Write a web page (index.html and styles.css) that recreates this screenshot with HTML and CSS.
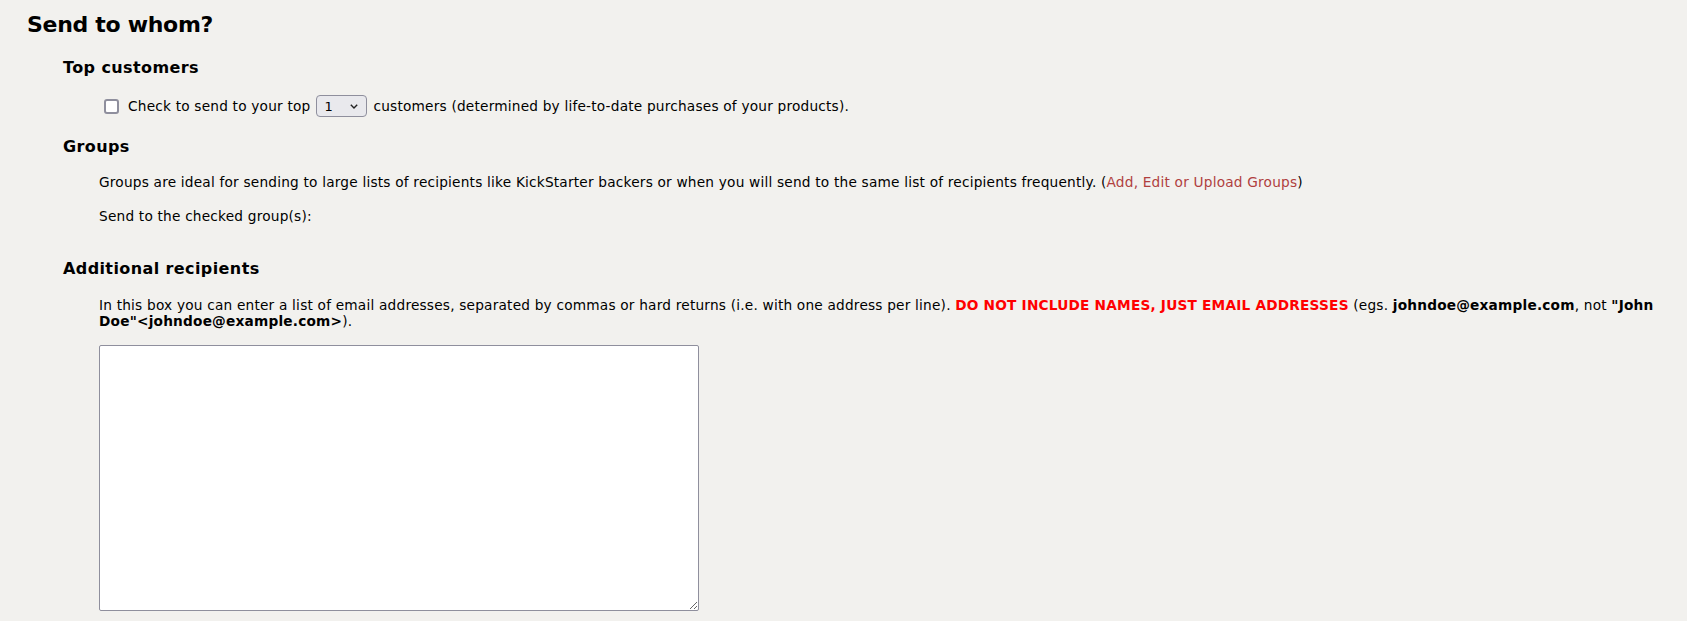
FILE: index.html
```html
<!DOCTYPE html>
<html lang="en">
<head>
    <meta charset="UTF-8">
    <meta name="viewport" content="width=device-width, initial-scale=1.0">
    <title>Send to whom?</title>
    <link rel="stylesheet" href="styles.css">
</head>
<body>
    <div class="panel">
        <h2>Send to whom?</h2>

        <!-- Top customers -->
        <h3>Top customers</h3>
        <div class="topRow">
            <input type="checkbox" id="sendTop">
            <label for="sendTop">Check to send to your top</label>
            <span class="selectWrap">
                <select id="topCount" class="topCount">
                    <option>1</option>
                    <option>5</option>
                    <option>10</option>
                    <option>25</option>
                    <option>50</option>
                    <option>100</option>
                </select>
                <svg class="chevron" width="8" height="5" viewBox="0 0 8 5"><path d="M0.8 0.8 L4 4 L7.2 0.8" fill="none" stroke="#222" stroke-width="1.4"/></svg>
            </span>
            <span>customers (determined by life-to-date purchases of your products).</span>
        </div>

        <!-- Groups -->
        <h3>Groups</h3>
        <p class="note">Groups are ideal for sending to large lists of recipients like KickStarter backers or when you will send to the same list of recipients frequently. (<a href="#">Add, Edit or Upload Groups</a>)</p>
        <p class="note">Send to the checked group(s):</p>

        <!-- Additional recipients -->
        <h3 class="extraHead">Additional recipients</h3>
        <p class="note boxNote">In this box you can enter a list of email addresses, separated by commas or hard returns (i.e. with one address per line). <b class="warn">DO NOT INCLUDE NAMES, JUST EMAIL ADDRESSES</b> (egs. <b>johndoe@example.com</b>, not <b>"John</b> <b>Doe"&lt;johndoe@example.com&gt;</b>).</p>
        <textarea id="recipients" class="recipients"></textarea>
    </div>
</body>
</html>
```

FILE: styles.css
```css
body {
    font-family: "DejaVu Sans", Verdana, sans-serif;
    font-size: 13.7px;
    letter-spacing: 0.2px;
    color: #000;
    background-color: #f2f1ee;
    margin: 0;
}

.panel {
    padding: 12px 0 0 27px;
}

h2 {
    font-size: 22px;
    line-height: 26px;
    letter-spacing: -0.3px;
    margin: 0;
}

h3 {
    font-size: 16px;
    line-height: 19px;
    letter-spacing: 0.4px;
    margin: 20px 0 0 36px;
}

.topRow {
    display: flex;
    align-items: center;
    margin: 18px 0 0 72px;
    height: 22px;
}

.topRow input[type="checkbox"] {
    appearance: none;
    -webkit-appearance: none;
    box-sizing: border-box;
    margin: 0 9px 0 5px;
    width: 15px;
    height: 15px;
    border: 2px solid #8f8f9d;
    border-radius: 3px;
    background: #fff;
}

.selectWrap {
    position: relative;
    display: inline-block;
    margin: 0 6px 0 6px;
    height: 22px;
}

.topCount {
    appearance: none;
    -webkit-appearance: none;
    width: 51px;
    height: 22px;
    padding: 0 0 0 7px;
    border: 1px solid #8f8f9d;
    border-radius: 4px;
    background: #e9e9ed;
    color: #000;
    font-family: "DejaVu Sans", Verdana, sans-serif;
    font-size: 13px;
}

.chevron {
    position: absolute;
    right: 9px;
    top: 9px;
    pointer-events: none;
}

.note {
    line-height: 16px;
    margin: 18px 0 0 72px;
}

a {
    color: #b0403e;
    text-decoration: none;
}

.extraHead {
    margin-top: 35px;
}

.boxNote {
    margin-top: 19px;
}

.warn {
    color: #ff0000;
}

.recipients {
    display: block;
    box-sizing: border-box;
    width: 600px;
    height: 266px;
    margin: 16px 0 0 72px;
    border: 1px solid #8f8f9d;
    border-radius: 2px;
    background: #fff;
}
```
